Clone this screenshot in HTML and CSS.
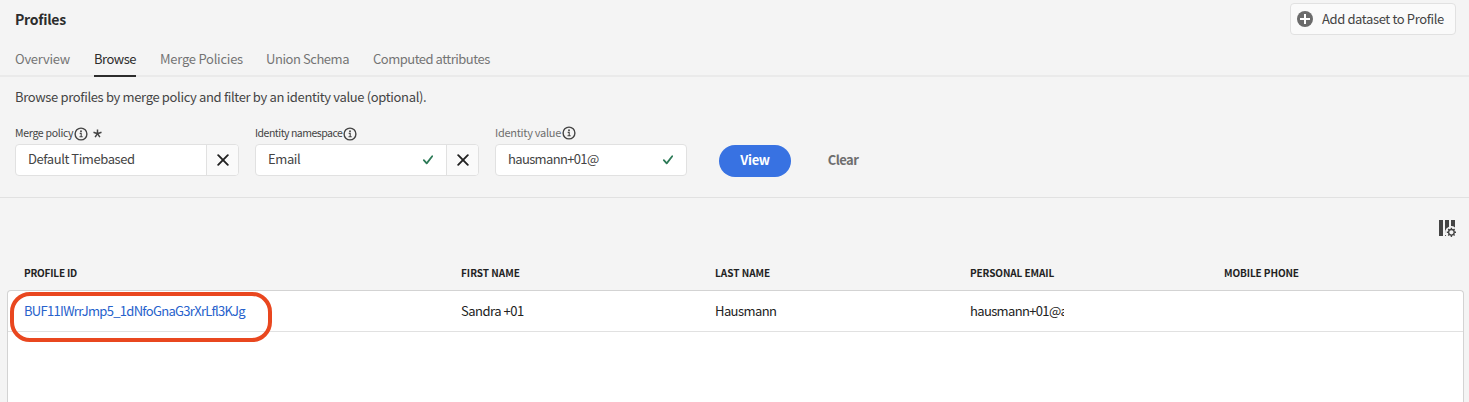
FILE: index.html
```html
<!DOCTYPE html>
<html lang="en">
<head>
<meta charset="utf-8">
<title>Profiles</title>
<link rel="stylesheet" href="styles.css">
</head>
<body>
<svg class="defs" width="0" height="0">
  <symbol id="info" viewBox="0 0 14 14"><circle cx="7" cy="7" r="5.9" fill="none" stroke="#444" stroke-width="1.4"/><circle cx="7" cy="4.3" r=".95" fill="#444"/><path d="M5.7 6.4H7.2V9.6M5.5 9.8H8.7" fill="none" stroke="#444" stroke-width="1.1"/></symbol>
  <symbol id="cross" viewBox="0 0 12 12"><path d="M1.2 1.2 10.8 10.8M10.8 1.2 1.2 10.8" stroke="#222" stroke-width="1.9" stroke-linecap="round"/></symbol>
  <symbol id="check" viewBox="0 0 12 12"><path d="M1.8 6.2 4.7 9.4 10.2 2.2" fill="none" stroke="#2d7a57" stroke-width="1.8" stroke-linecap="round" stroke-linejoin="round"/></symbol>
</svg>
<header class="header">
  <h1 class="title">Profiles</h1>
  <button class="add"><svg width="16" height="16" viewBox="0 0 16 16"><circle cx="8" cy="8" r="8" fill="#6b6b6b"/><path d="M8 3V13M3 8H13" stroke="#fff" stroke-width="2"/></svg><span class="t add-label">Add dataset to Profile</span></button>
</header>
<nav class="tabs">
  <a class="tab overview">Overview</a>
  <a class="tab browse">Browse</a>
  <a class="tab merge">Merge Policies</a>
  <a class="tab union">Union Schema</a>
  <a class="tab computed">Computed attributes</a>
</nav>
<section class="filters">
  <p class="description">Browse profiles by merge policy and filter by an identity value (optional).</p>
  <div class="form">
    <div class="field wide">
      <div class="label"><span class="t l-policy">Merge policy</span><svg class="info" width="14" height="14"><use href="#info"/></svg><svg class="star" width="9" height="9" viewBox="0 0 9 9"><path d="M4.5 4.7V.5M4.5 4.7 .5 3.3M4.5 4.7 8.5 3.3M4.5 4.7 2.1 8.2M4.5 4.7 6.9 8.2" stroke="#444" stroke-width="1.5"/></svg></div>
      <div class="input"><div class="value"><span class="t v-policy">Default Timebased</span></div><button class="clear-x"><svg width="12" height="12"><use href="#cross"/></svg></button></div>
    </div>
    <div class="field wide">
      <div class="label"><span class="t l-namespace">Identity namespace</span><svg class="info" width="14" height="14"><use href="#info"/></svg></div>
      <div class="input"><div class="value"><span class="t v-email">Email</span><svg width="12" height="12"><use href="#check"/></svg></div><button class="clear-x"><svg width="12" height="12"><use href="#cross"/></svg></button></div>
    </div>
    <div class="field narrow">
      <div class="label muted"><span class="t l-value">Identity value</span><svg class="info" width="14" height="14"><use href="#info"/></svg></div>
      <div class="input"><div class="value"><span class="t v-identity">hausmann+01@</span><svg width="12" height="12"><use href="#check"/></svg></div></div>
    </div>
    <button class="view">View</button>
    <button class="clear">Clear</button>
  </div>
</section>
<div class="toolbar"><svg width="18" height="18" viewBox="0 0 18 18"><path d="M0 0H4V16H0ZM6 0H10V6.7A6 6 0 0 0 7.2 16H6ZM12 0H16V7.4A6 6 0 0 0 12 6Z" fill="#444"/><circle cx="12.4" cy="12.3" r="2.8" fill="none" stroke="#444" stroke-width="1.3"/><path d="M12.4 9.5V7.7M12.4 15.1V16.9M9.6 12.3H7.8M15.2 12.3H17M10.4 10.3 9.2 9.1M14.4 10.3 15.6 9.1M10.4 14.3 9.2 15.5M14.4 14.3 15.6 15.5" stroke="#444" stroke-width="1.4"/></svg></div>
<main class="table">
  <div class="row head"><span class="h-id">PROFILE ID</span><span>FIRST NAME</span><span>LAST NAME</span><span class="h-narrow">PERSONAL EMAIL</span><span class="h-narrow">MOBILE PHONE</span></div>
  <div class="body">
    <div class="row data"><a class="id">BUF11IWrrJmp5_1dNfoGnaG3rXrLfl3KJg</a><span class="d-first">Sandra +01</span><span class="d-last">Hausmann</span><span class="clip">hausmann+01@a</span><span></span></div>
    <div class="highlight"></div>
  </div>
</main>
</body>
</html>
```
FILE: styles.css
```css
* { box-sizing: border-box; }
body { margin: 0; height: 402px; overflow: hidden; background: #f4f4f4; color: #444; font: 13px/20px "Noto Sans CJK SC", "Open Sans", sans-serif; font-kerning: normal; }
button { margin: 0; padding: 0; border: 0; background: none; font: inherit; color: inherit; }
svg { display: block; flex: none; }
.defs { position: absolute; }
.t { white-space: nowrap; }
.header { display: flex; justify-content: space-between; height: 44px; padding: 3px 13px 0 15px; }
.title { margin: 6px 0 0; font-size: 14px; line-height: 20px; font-weight: 700; letter-spacing: -.25px; color: #2c2c2c; }
.add { display: flex; align-items: center; gap: 9px; width: 166px; height: 32px; padding: 0 6px; border: 1px solid #e1e1e1; border-radius: 4px; background: #fafafa; }
.add-label { letter-spacing: -.38px; }
.tabs { display: flex; height: 33px; padding: 5px 15px 0; border-bottom: 2px solid #eaeaea; color: #747474; }
.tab { height: 28px; margin-right: 24px; white-space: nowrap; }
.overview { width: 55px; letter-spacing: -.25px; }
.browse { width: 42px; letter-spacing: -.5px; color: #2c2c2c; border-bottom: 2px solid #2c2c2c; }
.merge { width: 82px; letter-spacing: -.25px; }
.union { width: 83px; letter-spacing: -.45px; }
.computed { width: 117px; letter-spacing: -.5px; }
.filters { height: 121px; padding: 10px 15px 0; border-bottom: 1px solid #e1e1e1; }
.description { margin: 0; letter-spacing: -.345px; }
.form { display: flex; margin-top: 16px; }
.field { margin-right: 16px; }
.wide { width: 224px; }
.narrow { width: 192px; }
.label { display: flex; align-items: center; height: 21px; font-size: 10.5px; line-height: 16px; }
.label .t { padding-bottom: 2px; }
.label.muted { color: #6e6e6e; font-size: 11px; padding-bottom: 2px; }
.l-policy { letter-spacing: -.3px; }
.l-namespace { letter-spacing: -.5px; }
.l-value { letter-spacing: -.28px; }
.info { margin-left: 1px; }
.star { margin-left: 5px; }
.input { display: flex; height: 32px; border: 1px solid #e1e1e1; border-radius: 4px; background: #fff; overflow: hidden; }
.value { flex: 1; display: flex; align-items: center; justify-content: space-between; padding: 0 12px; }
.value .t { padding-bottom: 2px; }
.v-policy { letter-spacing: -.43px; }
.v-email { letter-spacing: -.4px; }
.v-identity { letter-spacing: -.65px; }
.clear-x { width: 32px; border-left: 1px solid #e1e1e1; background: #fafafa; display: grid; place-items: center; }
.view, .clear { height: 32px; margin-top: 22px; padding-bottom: 2px; font-weight: 700; }
.view { width: 72px; margin-left: 16px; border-radius: 16px; background: #3872e2; color: #fff; letter-spacing: -.3px; }
.clear { width: 104px; color: #6e6e6e; letter-spacing: -.55px; }
.toolbar { display: flex; justify-content: flex-end; height: 58px; padding: 22px 12px 0 0; }
.table { padding: 0 5px 0 7px; }
.row { display: grid; grid-template-columns: 437px 254px 255px 254px 1fr; align-items: center; }
.head { height: 34px; padding-left: 17px; font-size: 10px; font-weight: 700; color: #222; }
.h-id { letter-spacing: -.2px; }
.h-narrow { letter-spacing: -.1px; }
.body { position: relative; height: 112px; border: 1px solid #d3d3d3; border-bottom: 0; border-radius: 4px 4px 0 0; background: #fff; }
.data { height: 41px; padding: 0 0 1px 16px; border-bottom: 1px solid #e1e1e1; color: #222; }
.id { color: #2762cc; letter-spacing: -.7px; }
.d-first { letter-spacing: -.5px; }
.d-last { letter-spacing: -.58px; }
.clip { width: 94px; overflow: hidden; letter-spacing: -.65px; }
.highlight { position: absolute; left: 2px; top: 1px; width: 262px; height: 50px; border: 4px solid #e9471f; border-radius: 20px; }
```
